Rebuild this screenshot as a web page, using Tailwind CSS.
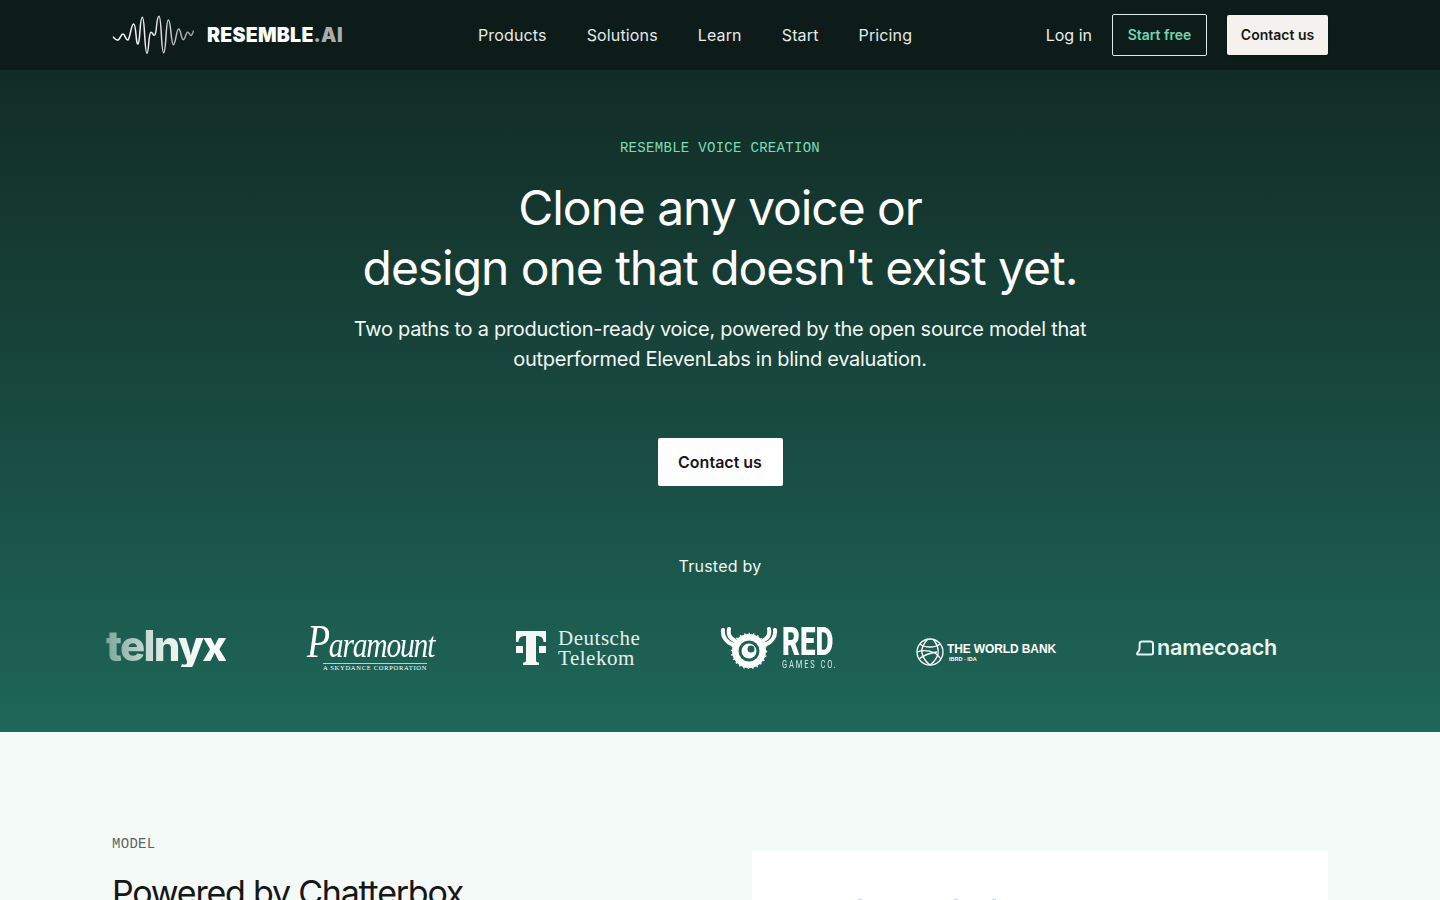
<!DOCTYPE html>
<html lang="en">
<head>
    <meta charset="UTF-8">
    <meta name="viewport" content="width=device-width, initial-scale=1.0">
    <title>Resemble AI - Voice Creation</title>
    <script src="https://cdn.jsdelivr.net/npm/@tailwindcss/browser@4"></script>
</head>
<body class="h-screen overflow-hidden bg-[#f4faf8] font-['Inter',sans-serif] text-white">

    <!-- nav -->
    <header class="h-[70px] bg-[#0d1c19] flex items-center px-[112px]">
        <div class="flex items-center w-[366px] shrink-0 gap-[13px]">
            <svg class="w-[82px] h-[42px]" viewBox="35 40 246 126" fill="none">
                <defs>
                    <linearGradient id="wave" x1="0" x2="1" y1="0" y2="0">
                        <stop offset="0" stop-color="#ffffff"/>
                        <stop offset="0.5" stop-color="#e8e8e8"/>
                        <stop offset="1" stop-color="#9a9a9a"/>
                    </linearGradient>
                </defs>
                <path d="M38 108 C44 116 48 120 54 118 C60 114 62 100 68 100 C74 100 76 120 83 118 C90 112 92 70 100 70 C108 70 106 132 113 130 C120 124 118 50 126 50 C134 50 132 158 140 158 C146 158 144 96 152 95 C158 95 158 108 164 102 C170 92 168 47 176 47 C184 47 182 156 190 156 C198 156 196 58 204 58 C212 58 212 132 219 132 C226 132 228 85 235 85 C242 85 242 117 249 117 C255 117 256 96 262 95 C268 95 268 106 273 104 C276 102 278 94 280 90" stroke="url(#wave)" stroke-width="4.5"/>
            </svg>
            <span class="mt-[2px] text-[19.5px] font-black leading-none tracking-[0.013em]">RESEMBLE<span class="text-[#a8aeab]">.AI</span></span>
        </div>
        <nav class="flex-1 flex items-center gap-10 text-base tracking-[0.009em] text-[#e4ebe8]">
            <a>Products</a>
            <a>Solutions</a>
            <a>Learn</a>
            <a>Start</a>
            <a>Pricing</a>
        </nav>
        <div class="flex items-center">
            <a class="text-base text-[#e8efec] mr-5">Log in</a>
            <a class="w-[95px] h-[42px] flex items-center justify-center border border-[#dfeae6] rounded-[2px] text-sm font-semibold text-[#6fd6ae] mr-5">Start free</a>
            <a class="w-[101px] h-10 flex items-center justify-center bg-[#f4f1ef] rounded-[2px] text-sm font-semibold text-[#171717] shadow-sm">Contact us</a>
        </div>
    </header>

    <!-- hero -->
    <section class="h-[662px] bg-gradient-to-b from-[#112c25] to-[#1e6759] pt-[68px] text-center">
        <p class="font-['Liberation_Mono',monospace] text-sm leading-[20px] tracking-[0.3px] text-[#7ddcb8]">RESEMBLE VOICE CREATION</p>
        <h1 class="mt-[20px] text-[48px] leading-[60px] font-normal tracking-[-0.022em] text-white">Clone any voice or<br>design one that doesn't exist yet.</h1>
        <p class="mt-[16px] text-[20px] leading-[30px] tracking-[-0.014em] text-[#f2f7f5]">Two paths to a production-ready voice, powered by the open source model that<br>outperformed ElevenLabs in blind evaluation.</p>
        <a class="mt-[64px] mx-auto w-[125px] h-12 flex items-center justify-center bg-white rounded-[2px] text-base font-semibold text-[#171717]">Contact us</a>
        <p class="mt-[68px] text-base leading-6 font-normal tracking-[0.015em] text-[#f2f7f5]">Trusted by</p>

        <!-- logos -->
        <div class="mt-[45px] ml-[106px] flex items-center gap-20 h-[50px] text-left">
            <div class="w-[120px] mb-[5px] text-[42px] font-extrabold leading-none tracking-[-0.04em] bg-gradient-to-r from-[#7fa79c] via-[#e6efec] to-white bg-clip-text text-transparent">telnyx</div>

            <div class="w-[130px] flex flex-col items-center text-white">
                <span class="font-['Liberation_Serif',serif] italic text-[36px] leading-[34px] tracking-[-0.04em] whitespace-nowrap scale-x-[0.82]"><span class="text-[46px]">P</span>aramount</span>
                <span class="font-['Liberation_Serif',serif] text-[6.5px] leading-[8px] tracking-[0.11em] border-t border-white/70 mt-px whitespace-nowrap ml-[8px]">A SKYDANCE CORPORATION</span>
            </div>

            <div class="w-[124px] flex items-center gap-[12px]">
                <svg class="w-[30px] h-[34px] shrink-0" viewBox="0 0 30 34" fill="#f4f8f6">
                    <path d="M0 0H30V11H27.5C27.5 7 25 5 21 5H20V29C20 31 21 31.5 23 31.5V34H7V31.5C9 31.5 10 31 10 29V5H9C5 5 2.5 7 2.5 11H0Z"/>
                    <rect x="0" y="15" width="7" height="7"/>
                    <rect x="23" y="15" width="7" height="7"/>
                </svg>
                <div class="shrink-0 font-['Liberation_Serif',serif] text-[21px] leading-[20px] tracking-[0.025em] text-[#e6efec]">Deutsche<br>Telekom</div>
            </div>

            <div class="w-[116px] flex items-center gap-[4px]">
                <svg class="w-[58px] h-[42px] shrink-0" viewBox="0 0 58 42" fill="none">
                    <path d="M3 3C2 10 7 16 14 18M9 2C8 7 10 11 14 13M55 3C56 10 51 16 44 18M49 2C50 7 48 11 44 13" stroke="white" stroke-width="4" stroke-linecap="round"/>
                    <circle cx="29" cy="24" r="17" fill="white"/>
                    <circle cx="29" cy="24" r="17.4" stroke="white" stroke-width="1.5" stroke-dasharray="1.5 3"/>
                    <circle cx="29" cy="24" r="10.5" fill="#1d6255"/>
                    <circle cx="29" cy="24" r="7.5" fill="white"/>
                    <circle cx="31" cy="22" r="3.5" fill="#1d6255"/>
                </svg>
                <div class="flex flex-col items-start">
                    <span class="font-['Roboto',sans-serif] text-[39px] font-black leading-[30px] scale-x-[0.71] origin-left whitespace-nowrap">RED</span>
                    <span class="font-['Roboto',sans-serif] text-[10px] leading-[10px] mt-[3px] tracking-[0.25em] scale-x-[0.75] origin-left whitespace-nowrap text-[#dbe7e3]">GAMES CO.</span>
                </div>
            </div>

            <div class="w-[140px] mt-[8px] flex items-center gap-[3px]">
                <svg class="w-[28px] h-[28px] shrink-0" viewBox="0 0 28 28" fill="none" stroke="white" stroke-width="1.3">
                    <circle cx="14" cy="14" r="13"/>
                    <path d="M12 1C7 6 5 10 6 15C7 20 10 24 14 27M17 1C21 6 23 11 22 16C21 20 18 24 14 27"/>
                    <path d="M4 6C9 10 19 10 24 6M1 14C6 12 12 12 19 15C22 17 24 20 25 21M3 21C8 17 14 15 21 14"/>
                </svg>
                <div class="flex flex-col">
                    <span class="font-['Liberation_Sans',sans-serif] text-[12px] font-bold leading-[13px] tracking-[-0.01em] whitespace-nowrap">THE WORLD BANK</span>
                    <span class="font-['Liberation_Sans',sans-serif] text-[5.5px] font-bold leading-[6px] pl-[2px] whitespace-nowrap">IBRD · IDA</span>
                </div>
            </div>

            <div class="w-[141px] flex items-center gap-[3px]">
                <svg class="w-[18px] h-[16px] shrink-0" viewBox="0 0 18 16" fill="none" stroke="#eaf3f0" stroke-width="2">
                    <path d="M6 1.5H14.5C16 1.5 17 2.5 17 4V13C17 14 16 14.5 15 14.5H2C1 14.5 .8 13.6 1.4 13C3 11.5 3.6 10 3.6 8V4C3.6 2.5 4.5 1.5 6 1.5Z"/>
                </svg>
                <span class="text-[21.6px] font-semibold leading-none tracking-[-0.01em] text-[#eaf3f0]">namecoach</span>
            </div>
        </div>
    </section>

    <!-- model -->
    <section class="px-[112px] pt-[102px] grid grid-cols-2 gap-16 text-[#171717]">
        <div>
            <p class="font-['Liberation_Mono',monospace] text-sm leading-5 tracking-[0.3px] text-[#5b6562]">MODEL</p>
            <h2 class="mt-[19px] text-[34px] leading-10 font-normal tracking-[-0.036em]">Powered by Chatterbox</h2>
        </div>
        <div class="relative bg-white h-[200px] mt-[17px]">
            <span class="absolute left-[106px] top-[48px] w-1 h-px bg-gray-300"></span>
            <span class="absolute left-[202px] top-[48px] w-1 h-px bg-gray-300"></span>
            <span class="absolute left-[240px] top-[48px] w-1 h-px bg-gray-300"></span>
        </div>
    </section>

</body>
</html>
